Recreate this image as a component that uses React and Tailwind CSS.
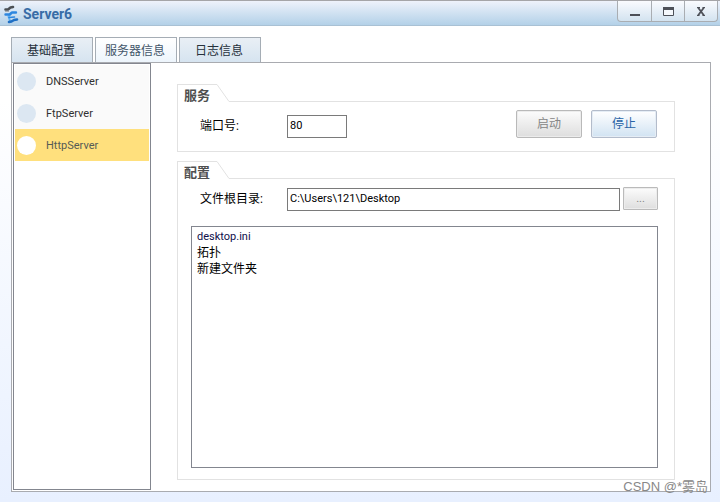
import React from "react";

const tabs = ["基础配置", "服务器信息", "日志信息"];
const servers = ["DNSServer", "FtpServer", "HttpServer"];
const files = ["desktop.ini", "拓扑", "新建文件夹"];

function Logo() {
  return (
    <svg className="h-5 w-4 shrink-0" viewBox="0 0 16 20" fill="none" aria-hidden="true">
      <path d="M2.500 5.500 5 5.500 7.500 3.500 10 3" stroke="#4b4f54" strokeWidth="2.600" strokeLinecap="round" strokeLinejoin="round" />
      <path d="M2 7.500 6 7.500" stroke="#a5abb0" strokeWidth="1" />
      <path d="M8 9.500 5.500 12.500 7 17" stroke="#62b4f4" strokeWidth="2" strokeLinecap="round" strokeLinejoin="round" />
      <path d="M2.500 10.500 6.500 10.500 9 8.500 13 8.500" stroke="#2d86df" strokeWidth="2.400" strokeLinecap="round" strokeLinejoin="round" />
      <path d="M6 13.500 11.500 13" stroke="#2d86df" strokeWidth="1.600" strokeLinecap="round" />
      <path d="M6 18 8.500 17.500 11 16 14 15.500" stroke="#1f6fc4" strokeWidth="2.600" strokeLinecap="round" strokeLinejoin="round" />
    </svg>
  );
}

function WindowButton({ label, children }) {
  return (
    <button
      type="button"
      aria-label={label}
      className="flex w-[33px] items-center justify-center border-l border-[#a9adb2] first:border-l-0"
    >
      {children}
    </button>
  );
}

function TitleBar() {
  return (
    <header className="flex h-[26px] shrink-0 items-start justify-between border-t border-b border-t-[#a5a5a8] border-b-[#a9c1d4] bg-linear-to-b from-[#eef2fb] to-[#b3d1e8] pr-0.5">
      <div className="flex h-6 items-center gap-1 pt-0.5 pl-[3px]">
        <Logo />
        <h1 className="font-[Roboto,'Noto_Sans',sans-serif] text-[14px] leading-4 font-bold text-[#386ca6]">
          Server6
        </h1>
      </div>
      <div className="flex h-[21px] rounded-b-[4px] border border-t-0 border-[#a9adb2] bg-linear-to-b from-[#fafbfe] to-[#d3e3f0]">
        <WindowButton label="最小化">
          <svg className="h-4 w-4" viewBox="0 0 16 16" aria-hidden="true">
            <path d="M3 11h10v2H3z" fill="#4d5058" />
          </svg>
        </WindowButton>
        <WindowButton label="最大化">
          <svg className="h-4 w-4" viewBox="0 0 16 16" aria-hidden="true">
            <path d="M3.500 4.500h10v8h-10z" fill="#f5f8fc" stroke="#4d5058" />
            <path d="M3 4h11v3H3z" fill="#4d5058" />
          </svg>
        </WindowButton>
        <WindowButton label="关闭">
          <svg className="h-4 w-4" viewBox="0 0 16 16" fill="none" aria-hidden="true">
            <path d="m5 4.500 6 8M11 4.500l-6 8" stroke="#4d5058" strokeWidth="1.800" />
            <path d="M4 4.500h3M9.500 4.500H12M4 12.500h2.500M9.500 12.500H12" stroke="#4d5058" />
          </svg>
        </WindowButton>
      </div>
    </header>
  );
}

function Group({ title, className, children }) {
  return (
    <section className={className}>
      <div className="flex h-[18px]">
        <h2 className="w-10 border-t border-l border-[#e2e2e2] pt-[3px] pl-1.5 text-[13px] leading-4 font-bold text-[#4f4f4f]">
          {title}
        </h2>
        <svg className="h-[18px] w-3" viewBox="0 0 12 18" fill="none" aria-hidden="true">
          <path d="M0 .5 12 17.500" stroke="#e2e2e2" />
        </svg>
        <div className="grow border-b border-[#e2e2e2]" />
      </div>
      <div className="flex grow flex-col border border-t-0 border-[#e2e2e2]">{children}</div>
    </section>
  );
}

export default function App() {
  return (
    <div className="flex min-h-screen flex-col bg-linear-to-b from-white from-20% to-[#e8f0ff] font-[Roboto,'Noto_Sans_CJK_SC',sans-serif] text-[11px] text-black">
      <TitleBar />
      <main className="flex grow flex-col pt-[11px] pr-[9px] pb-2.5 pl-[11px]">
        <div role="tablist" className="flex gap-0.5">
          {tabs.map((tab, i) => (
            <button
              key={tab}
              type="button"
              role="tab"
              aria-selected={i === 1}
              className={
                "h-[25px] w-[82px] border border-b-0 border-[#a5adb5] pt-0.5 pr-0.5 text-[12px] leading-4 " +
                (i === 1
                  ? "bg-linear-to-b from-white to-[#edf5fc] text-[#43566a]"
                  : "bg-linear-to-b from-[#e9eff5] to-[#d6e4f0] text-[#26313c]")
              }
            >
              {tab}
            </button>
          ))}
        </div>
        <div className="flex grow border border-[#a9abb0] bg-white pr-[35px] pb-px pl-px">
          <nav className="w-[138px] shrink-0 border border-[#83868f] p-px">
            {servers.map((server) => (
              <button
                key={server}
                type="button"
                className={
                  "flex h-8 w-full items-center gap-2.5 pl-0.5 text-left " +
                  (server === "HttpServer" ? "bg-[#ffe07d] text-[#555b55]" : "bg-[#fafafa] text-[#303030]")
                }
              >
                <span
                  className={
                    "size-[19px] rounded-full " + (server === "HttpServer" ? "bg-white" : "bg-[#dce7f2]")
                  }
                />
                <span className="pt-0.5">{server}</span>
              </button>
            ))}
          </nav>
          <div className="flex min-w-0 grow flex-col gap-[9px] pt-[21px] pb-2.5 pl-[26px]">
            <Group title="服务" className="flex flex-col">
              <div className="flex items-start pt-2 pr-[17px] pb-[13px] pl-[22px]">
                <label htmlFor="port" className="w-[87px] pt-2 text-[12px] leading-4">
                  端口号:
                </label>
                <input
                  id="port"
                  defaultValue="80"
                  className="mt-[5px] h-[23px] w-[60px] border border-[#7a7a7a] bg-white px-0.5 pb-0.5"
                />
                <div className="ml-auto flex gap-[9px]">
                  <button
                    type="button"
                    disabled
                    className="h-7 w-[66px] rounded-[2px] border border-[#b9b9b9] bg-linear-to-b from-[#fcfcfc] to-[#dedede] text-[12px] text-[#858585] shadow-[inset_0_0_0_1px_#ececec]"
                  >
                    启动
                  </button>
                  <button
                    type="button"
                    className="h-7 w-[66px] rounded-[2px] border border-[#b3bccb] bg-linear-to-b from-white to-[#d1e3f2] text-[12px] text-[#2a64a6] shadow-[inset_0_0_0_1px_#e5edf5]"
                  >
                    停止
                  </button>
                </div>
              </div>
            </Group>
            <Group title="配置" className="flex grow flex-col">
              <div className="flex items-start pt-2 pr-4 pl-[22px]">
                <label htmlFor="root-dir" className="w-[87px] shrink-0 pt-1 text-[12px] leading-4">
                  文件根目录:
                </label>
                <input
                  id="root-dir"
                  defaultValue="C:\Users\121\Desktop"
                  className="mt-px mr-[3px] h-[23px] min-w-0 grow border border-[#7a7a7a] bg-white px-0.5 pb-0.5"
                />
                <button
                  type="button"
                  aria-label="浏览"
                  className="h-[23px] w-[35px] rounded-[1px] border border-[#bababa] bg-linear-to-b from-[#fcfcfc] to-[#dedede] pt-0.5 text-[#858585] shadow-[inset_0_0_0_1px_#ececec]"
                >
                  ...
                </button>
              </div>
              <ul className="mt-[15px] mr-4 mb-[11px] ml-[13px] grow border border-[#83868f] px-[5px] pt-0.5 text-[12px] leading-4">
                {files.map((file) => (
                  <li key={file} className="first:text-[11px] first:text-[#10104a]">
                    {file}
                  </li>
                ))}
              </ul>
            </Group>
          </div>
        </div>
      </main>
      <div className="pointer-events-none absolute right-3 bottom-[5px] font-['Liberation_Sans','Noto_Sans_CJK_SC',sans-serif] text-[13px] leading-5 text-[#888888]">
        CSDN @*雾岛
      </div>
    </div>
  );
}
